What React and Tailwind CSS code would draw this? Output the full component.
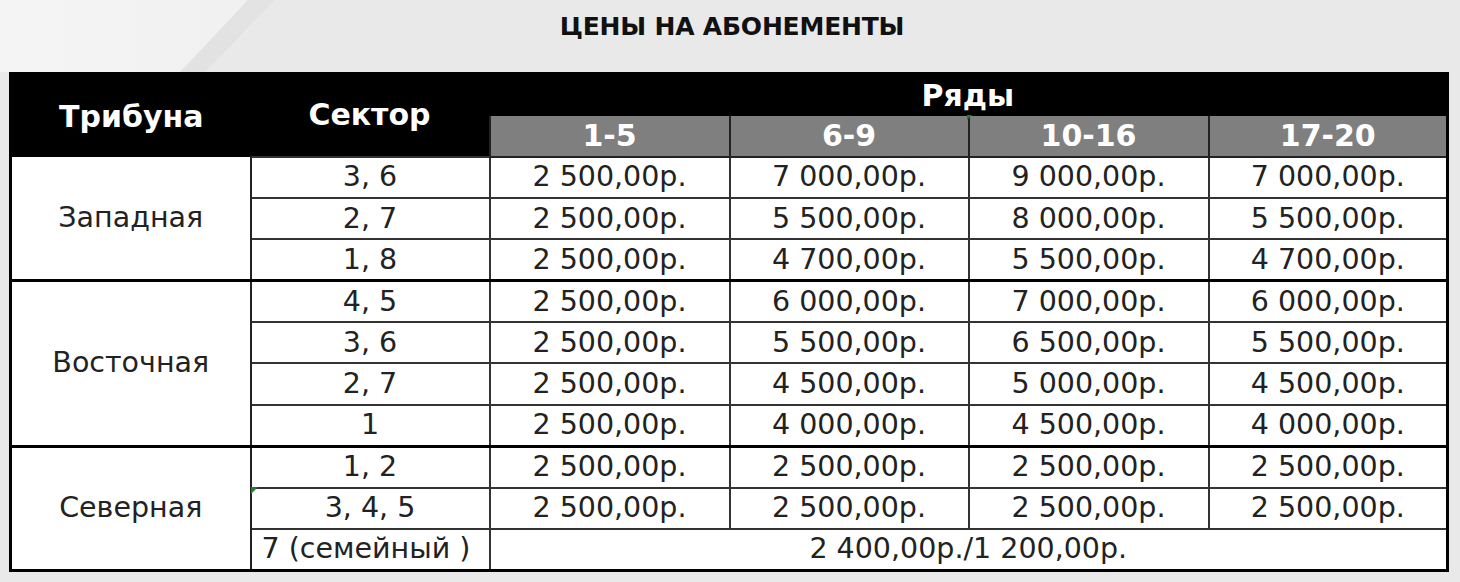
import React from "react";

const groups = [
  {
    name: "Западная",
    rows: [
      ["3, 6", "2 500,00р.", "7 000,00р.", "9 000,00р.", "7 000,00р."],
      ["2, 7", "2 500,00р.", "5 500,00р.", "8 000,00р.", "5 500,00р."],
      ["1, 8", "2 500,00р.", "4 700,00р.", "5 500,00р.", "4 700,00р."],
    ],
  },
  {
    name: "Восточная",
    rows: [
      ["4, 5", "2 500,00р.", "6 000,00р.", "7 000,00р.", "6 000,00р."],
      ["3, 6", "2 500,00р.", "5 500,00р.", "6 500,00р.", "5 500,00р."],
      ["2, 7", "2 500,00р.", "4 500,00р.", "5 000,00р.", "4 500,00р."],
      ["1", "2 500,00р.", "4 000,00р.", "4 500,00р.", "4 000,00р."],
    ],
  },
  {
    name: "Северная",
    rows: [
      ["1, 2", "2 500,00р.", "2 500,00р.", "2 500,00р.", "2 500,00р."],
      ["3, 4, 5", "2 500,00р.", "2 500,00р.", "2 500,00р.", "2 500,00р."],
    ],
    family: true,
  },
];

const font = "font-['DejaVu_Sans','Liberation_Sans',sans-serif]";

export default function App() {
  return (
    <div className={`relative w-[1460px] h-[582px] overflow-hidden bg-[#e9e9e9] ${font}`}>
      <div className="absolute inset-0 bg-[linear-gradient(90deg,#f4f4f4_0%,#ececec_40%,#e8e8e8_100%)] [clip-path:polygon(0_0,248px_0,180px_72px,0_72px)]" />
      <div className="absolute inset-0 bg-[linear-gradient(90deg,#dcdcdc_0%,#e9e9e9_100%)] [clip-path:polygon(248px_0,275px_0,205px_72px,180px_72px)] opacity-60" />
      <div className="relative flex flex-col items-center">
        <h1 className="h-[72px] pt-[12px] pl-[4px] text-[25px] leading-[30px] font-bold text-[#111] tracking-[-0.2px]">
          ЦЕНЫ НА АБОНЕМЕНТЫ
        </h1>
      </div>
      <div className="relative px-[9px]">
        <table className="w-[1437px] table-fixed border-collapse border-[3px] border-black bg-white text-[28.5px] text-[#222]">
          <colgroup>
            <col className="w-[240px]" />
            <col className="w-[239px]" />
            <col className="w-[240px]" />
            <col className="w-[239px]" />
            <col className="w-[240px]" />
            <col className="w-[239px]" />
          </colgroup>
          <thead>
            <tr className="h-[42px] bg-black text-white">
              <th rowSpan={2} className="bg-black pt-[2px] text-[30px] font-bold leading-[34px]">Трибуна</th>
              <th rowSpan={2} className="bg-black text-[30px] font-bold leading-[34px]">Сектор</th>
              <th colSpan={4} className="relative bg-black pt-[2px] text-[30px] font-bold leading-[34px]">
                Ряды
                <span className="absolute left-[477px] bottom-[-4px] h-0 w-0 border-l-[5px] border-t-[5px] border-l-transparent border-t-[#1e7f2e] rotate-[-90deg]" />
              </th>
            </tr>
            <tr className="h-[41px] text-white">
              {["1-5", "6-9", "10-16", "17-20"].map((r) => (
                <th
                  key={r}
                  className="border-x-2 border-b-2 border-[#222] bg-[#7f7f7f] p-0 text-[30px] font-bold leading-[34px]"
                >
                  {r}
                </th>
              ))}
            </tr>
          </thead>
          <tbody>
            {groups.map((g, gi) => {
              const total = g.rows.length + (g.family ? 1 : 0);
              return (
                <React.Fragment key={g.name}>
                  {g.rows.map((row, ri) => (
                    <tr
                      key={ri}
                      className={`h-[41.4px] ${ri === 0 && gi > 0 ? "border-t-[3px] border-t-black" : ""}`}
                    >
                      {ri === 0 && (
                        <td
                          rowSpan={total}
                          className="border-r-2 border-[#222] text-center text-[28.5px] leading-[30px]"
                        >
                          {g.name}
                        </td>
                      )}
                      {row.map((c, ci) => (
                        <td
                          key={ci}
                          className={`relative border-2 border-[#333] p-0 text-center leading-[34px] ${ri === 0 && gi > 0 ? "border-t-[3px] border-t-black" : ""}`}
                        >
                          {c}
                          {g.family && ri === 1 && ci === 0 && (
                            <span className="absolute left-[-1px] top-[-2px] h-0 w-0 border-l-[7px] border-b-[7px] border-l-[#1e7f2e] border-b-transparent" />
                          )}
                        </td>
                      ))}
                    </tr>
                  ))}
                  {g.family && (
                    <tr className="h-[41.4px]">
                      <td className="border-2 border-[#333] pl-[10px] p-0 text-left leading-[34px] whitespace-nowrap">
                        7 (семейный )
                      </td>
                      <td colSpan={4} className="border-2 border-[#333] p-0 text-center leading-[34px]">
                        2 400,00р./1 200,00р.
                      </td>
                    </tr>
                  )}
                </React.Fragment>
              );
            })}
          </tbody>
        </table>
      </div>
    </div>
  );
}
